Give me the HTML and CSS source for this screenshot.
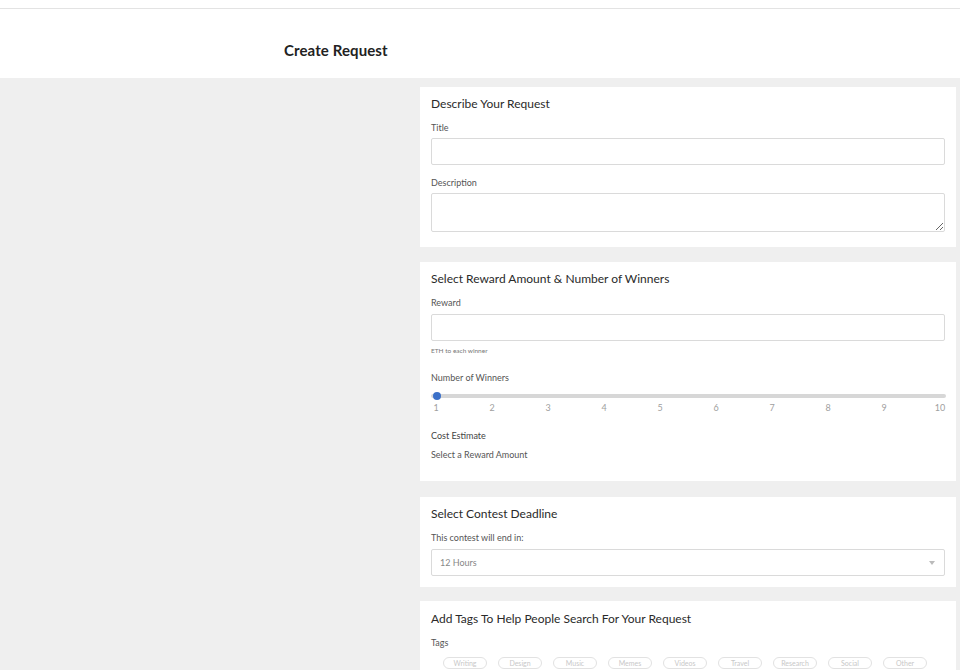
FILE: index.html
```html
<!DOCTYPE html>
<html>
<head>
<meta charset="utf-8">
<link rel="stylesheet" href="styles.css">
</head>
<body>
<div class="topbar"></div>
<header class="header">
  <h1 class="page-title">Create Request</h1>
</header>
<main class="main">
  <section class="card card-describe">
    <h2 class="card-title">Describe Your Request</h2>
    <label class="label">Title</label>
    <input class="input" type="text">
    <label class="label label-spaced">Description</label>
    <textarea class="textarea"></textarea>
  </section>

  <section class="card card-reward">
    <h2 class="card-title">Select Reward Amount &amp; Number of Winners</h2>
    <label class="label">Reward</label>
    <input class="input" type="text">
    <div class="hint">ETH to each winner</div>
    <label class="label label-winners">Number of Winners</label>
    <div class="slider">
      <div class="slider-track"></div>
      <div class="slider-thumb"></div>
    </div>
    <div class="ticks">
      <span>1</span><span>2</span><span>3</span><span>4</span><span>5</span><span>6</span><span>7</span><span>8</span><span>9</span><span>10</span>
    </div>
    <div class="label label-cost">Cost Estimate</div>
    <div class="label label-estimate">Select a Reward Amount</div>
  </section>

  <section class="card card-deadline">
    <h2 class="card-title">Select Contest Deadline</h2>
    <label class="label">This contest will end in:</label>
    <div class="select">
      <span class="select-value">12 Hours</span>
      <span class="select-arrow"></span>
    </div>
  </section>

  <section class="card card-tags">
    <h2 class="card-title">Add Tags To Help People Search For Your Request</h2>
    <label class="label">Tags</label>
    <div class="tags">
      <span class="tag">Writing</span>
      <span class="tag">Design</span>
      <span class="tag">Music</span>
      <span class="tag">Memes</span>
      <span class="tag">Videos</span>
      <span class="tag">Travel</span>
      <span class="tag">Research</span>
      <span class="tag">Social</span>
      <span class="tag">Other</span>
    </div>
  </section>
</main>
</body>
</html>
```
FILE: styles.css
```css
* { box-sizing: border-box; }
html, body { margin: 0; padding: 0; }
body {
  background: #efefef;
  font-family: "Lato", "Liberation Sans", sans-serif;
  color: #333;
  height: 670px;
  overflow: hidden;
}
.topbar {
  height: 9px;
  background: #fff;
  border-bottom: 1px solid #e3e3e3;
}
.header {
  background: #fff;
  height: 69px;
  padding: 31px 0 0 284px;
}
.page-title {
  margin: 0;
  font-size: 15px;
  font-weight: 700;
  color: #222;
  line-height: 20px;
  letter-spacing: 0.1px;
}
.main {
  display: flex;
  flex-direction: column;
  gap: 15px;
  padding: 9px 4px 0 420px;
}
.card {
  background: #fff;
  width: 536px;
  padding: 9px 11px 15px 11px;
  display: flex;
  flex-direction: column;
}
.card-reward { padding-bottom: 20px; }
.card-deadline { padding-bottom: 11px; margin-top: 1px; }
.card-tags { padding-top: 10px; margin-top: -1px; }
.card-title {
  margin: 0 0 10px 0;
  font-size: 12px;
  font-weight: 400;
  line-height: 16px;
  color: #2a2a2a;
}
.label {
  display: block;
  font-size: 9px;
  line-height: 12px;
  color: #555;
  margin-bottom: 4px;
}
.label-spaced { margin-top: 12px; }
.input, .textarea, .select {
  width: 514px;
  border: 1px solid #dadada;
  border-radius: 2px;
  background: #fff;
  margin: 0;
  outline: none;
}
.input { height: 27px; }
.card-reward .input { margin-top: 1px; }
.textarea { height: 39px; resize: vertical; display: block; }
.hint {
  font-size: 6.5px;
  line-height: 10px;
  color: #777;
  margin-top: 5px;
}
.label-winners { margin-top: 16px; margin-bottom: 7px; }
.slider {
  position: relative;
  height: 10px;
  width: 515px;
}
.slider-track {
  position: absolute;
  left: 0; right: 0; top: 3px;
  height: 4px;
  border-radius: 2px;
  background: #d7d7d7;
}
.slider-thumb {
  position: absolute;
  left: 2px; top: 1px;
  width: 8px; height: 8px;
  border-radius: 50%;
  background: #3b70c8;
}
.ticks {
  margin-top: 2px;
  width: 514px;
  display: flex;
  justify-content: space-between;
}
.ticks span {
  width: 10px;
  font-size: 9px;
  line-height: 10px;
  color: #a0a0a0;
  white-space: nowrap;
  display: flex;
  justify-content: center;
}
.label-cost { margin-top: 17px; margin-bottom: 7px; color: #444; }
.label-estimate { color: #555; margin-bottom: 0; }
.select {
  height: 27px;
  margin-top: 1px;
  display: flex;
  align-items: center;
  justify-content: space-between;
  padding: 0 9px 0 8px;
}
.select-value { font-size: 9px; color: #888; }
.select-arrow {
  width: 0; height: 0;
  border-left: 3px solid transparent;
  border-right: 3px solid transparent;
  border-top: 4px solid #bbb;
}
.tags {
  display: flex;
  gap: 11px;
  padding-left: 12px;
  margin-top: 4px;
}
.tag {
  width: 44px;
  height: 12px;
  border: 1px solid #e2e2e2;
  border-radius: 7px;
  font-size: 7px;
  line-height: 10px;
  color: #c8c8c8;
  display: flex;
  align-items: center;
  justify-content: center;
}
```
